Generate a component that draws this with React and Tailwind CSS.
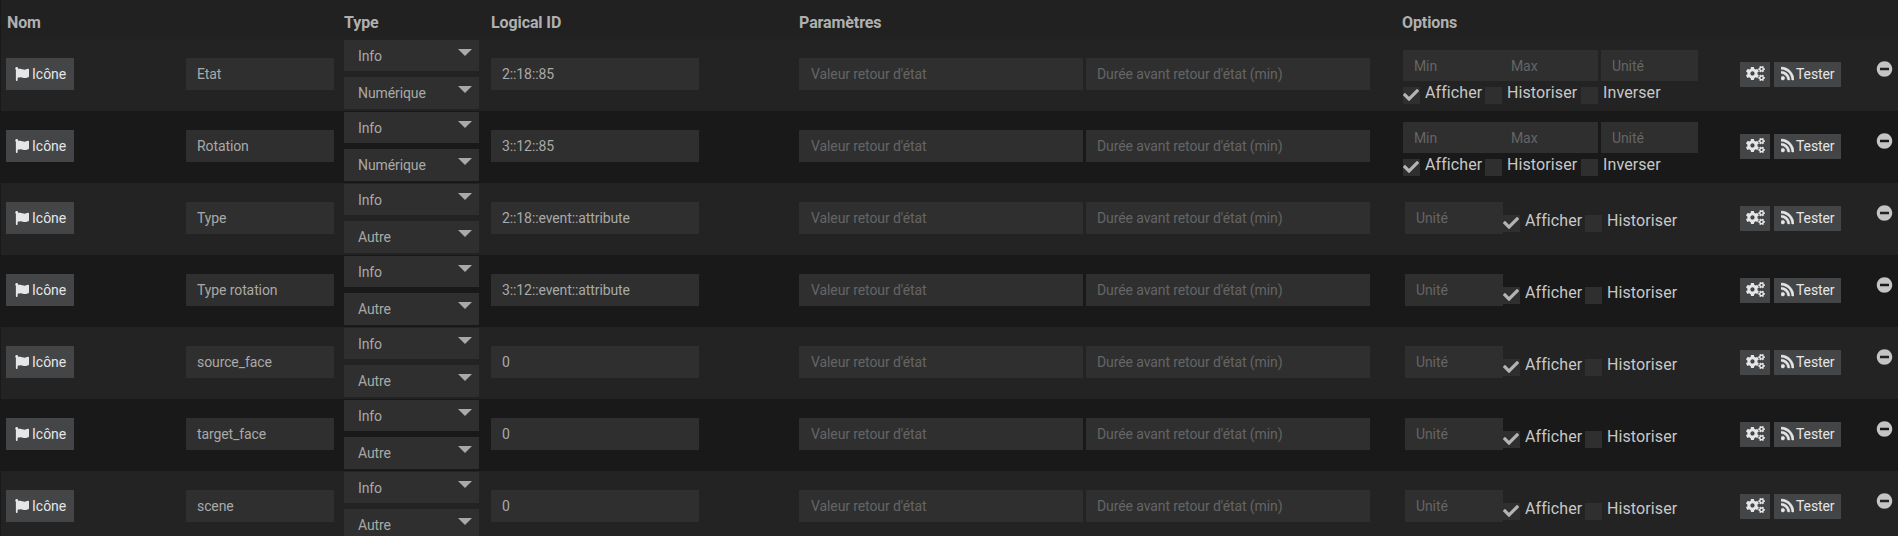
import React from 'react';
import { FaCheck, FaCogs, FaFlag, FaMinusCircle, FaRss } from 'react-icons/fa';

const commands = [
    { name: 'Etat', subType: 'Numérique', logicalId: '2::18::85' },
    { name: 'Rotation', subType: 'Numérique', logicalId: '3::12::85' },
    { name: 'Type', subType: 'Autre', logicalId: '2::18::event::attribute' },
    { name: 'Type rotation', subType: 'Autre', logicalId: '3::12::event::attribute' },
    { name: 'source_face', subType: 'Autre', logicalId: '0' },
    { name: 'target_face', subType: 'Autre', logicalId: '0' },
    { name: 'scene', subType: 'Autre', logicalId: '0' },
];

const Field = ({ className, placeholder, children }) => (
    <div className={`flex items-center shrink-0 whitespace-nowrap bg-[#2f2f2f] text-sm tracking-[-0.1px] ${placeholder ? 'text-[#656565]' : 'text-[#a9a9a9]'} ${className}`}>
        {placeholder || children}
    </div>
);

const Select = ({ className, children }) => (
    <div className={`flex justify-between w-[135px] bg-[#2f2f2f] text-sm tracking-[-0.1px] text-[#a9a9a9] pl-3.5 pr-[7px] ${className}`}>
        <span className="self-center">{children}</span>
        <svg className="mt-[9px] w-3.5 h-[7px]" viewBox="0 0 14 7" fill="#a9a9a9">
            <path d="M0 0h14L7 7z" />
        </svg>
    </div>
);

const Check = ({ checked, className, children }) => (
    <label className={`flex shrink-0 ${className}`}>
        <span className="flex w-[17px] h-[17px] bg-[#2f2f2f] mt-[5px] shrink-0">
            {checked && <FaCheck className="w-4 h-4 shrink-0 text-[#b4b4b4]" />}
        </span>
        <span className="text-base leading-[22px] tracking-[0.1px] text-[#c8c8c8] ml-[5px]">{children}</span>
    </label>
);

const NumericOptions = () => (
    <div className="w-[337px] pt-[11px] shrink-0">
        <div className="flex">
            <Field className="w-[98px] h-[31px] pl-[11px]" placeholder="Min" />
            <Field className="w-[97px] h-[31px] pl-2.5" placeholder="Max" />
            <Field className="w-[97px] h-[31px] pl-[11px] ml-[3px]" placeholder="Unité" />
        </div>
        <div className="flex mt-px">
            <Check checked className="w-[82px]">Afficher</Check>
            <Check className="w-24">Historiser</Check>
            <Check>Inverser</Check>
        </div>
    </div>
);

const OtherOptions = () => (
    <div className="flex w-[337px] pt-[19px] pl-0.5 shrink-0">
        <Field className="w-[98px] h-8 pl-[11px]" placeholder="Unité" />
        <Check checked className="w-[82px] mt-2">Afficher</Check>
        <Check className="mt-2">Historiser</Check>
    </div>
);

const CommandRow = ({ name, subType, logicalId }) => (
    <div className="flex h-[72px] pl-[5px] odd:bg-[#232323] even:bg-[#191919]">
        <div className="flex w-[338px] pt-[19px] shrink-0">
            <button className="flex items-center w-[68px] h-8 bg-[#444547] text-sm text-[#e6e6e6] pl-[9px]">
                <FaFlag className="w-3.5 h-3.5 mr-[3px] shrink-0" />
                Icône
            </button>
            <Field className="w-[148px] h-8 pl-[11px] ml-28">{name}</Field>
        </div>
        <div className="w-[147px] pt-px shrink-0">
            <Select className="h-[31px]">Info</Select>
            <Select className="h-8 mt-1.5">{subType}</Select>
        </div>
        <div className="w-[308px] pt-[19px] shrink-0">
            <Field className="w-[208px] h-8 pl-[11px]">{logicalId}</Field>
        </div>
        <div className="flex gap-[3px] w-[604px] pt-[19px] shrink-0">
            <Field className="w-[284px] h-8 pl-3" placeholder="Valeur retour d'état" />
            <Field className="w-[284px] h-8 pl-[11px]" placeholder="Durée avant retour d'état (min)" />
        </div>
        {subType === 'Numérique' ? <NumericOptions /> : <OtherOptions />}
        <div className="flex gap-1 pt-[23px] shrink-0">
            <button className="flex items-center justify-center w-[30px] h-[25px] pb-0.5 bg-[#444547] text-[#e6e6e6]">
                <FaCogs className="w-[19px] h-[15px]" />
            </button>
            <button className="flex items-center w-[67px] h-[25px] pb-0.5 bg-[#444547] text-sm tracking-[-0.1px] text-[#e6e6e6] pl-[7px]">
                <FaRss className="w-[13px] h-[15px] mr-0.5 shrink-0" stroke="currentColor" strokeWidth="16" />
                Tester
            </button>
        </div>
        <FaMinusCircle className="w-[17px] h-4 mt-[22px] ml-[35px] shrink-0 text-[#c4c4c4]" />
    </div>
);

const App = () => {
    return (
        <div className="w-[1898px] h-[536px] overflow-hidden bg-[#191919] pl-px font-['Roboto',sans-serif]">
            <div className="flex h-[39px] pl-1.5 pt-[11px] bg-[#212121] text-base font-bold tracking-[-0.1px] text-[#b0b0b0]">
                <div className="w-[337px]">Nom</div>
                <div className="w-[147px]">Type</div>
                <div className="w-[308px]">Logical ID</div>
                <div className="w-[603px]">Paramètres</div>
                <div>Options</div>
            </div>
            <div>
                {commands.map((command) => (
                    <CommandRow key={command.name} {...command} />
                ))}
            </div>
        </div>
    );
};

export default App;
